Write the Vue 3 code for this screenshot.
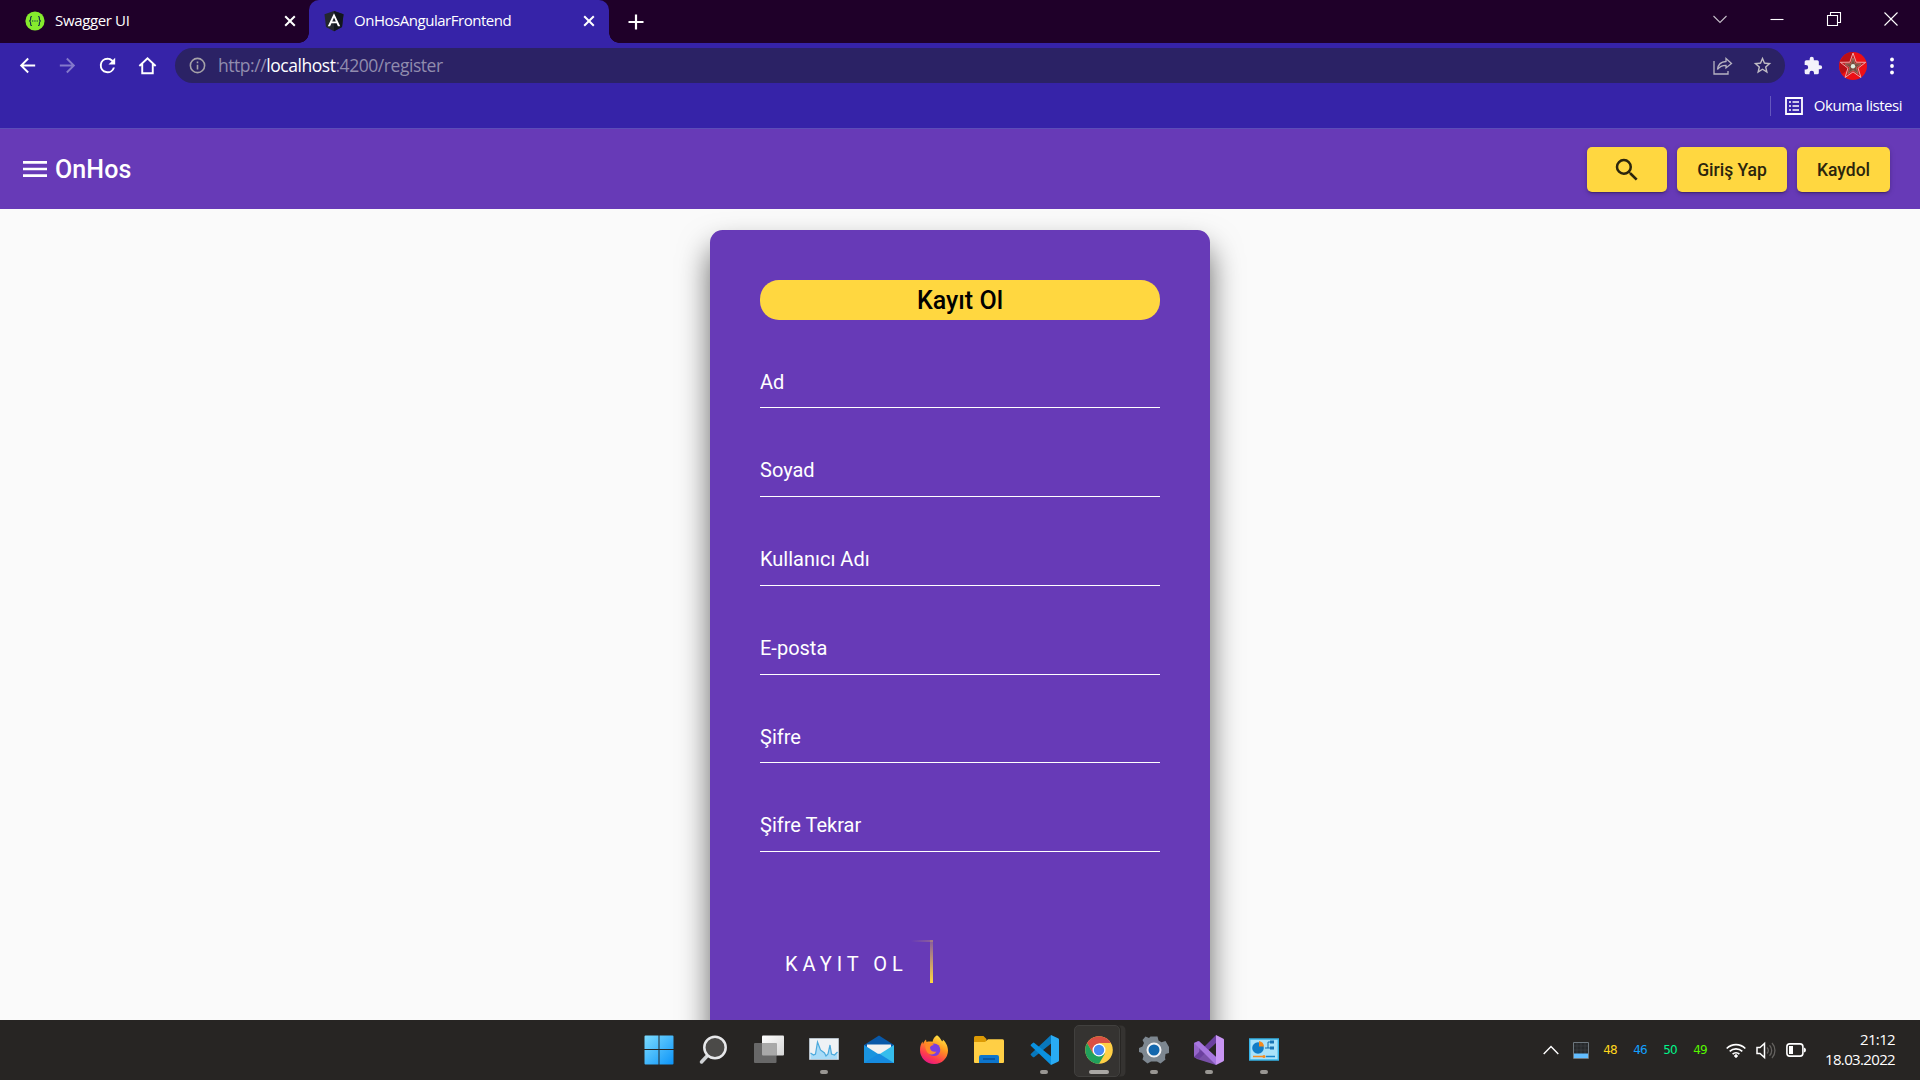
<script setup>
const fields = ['Ad', 'Soyad', 'Kullanıcı Adı', 'E-posta', 'Şifre', 'Şifre Tekrar']
const sensors = [
  { value: 48, tone: 'gold' },
  { value: 46, tone: 'blue' },
  { value: 50, tone: 'mint' },
  { value: 49, tone: 'lime' },
]
</script>

<template>
  <div class="screen">
    <div class="tabstrip">
      <div class="tab">
        <svg class="fav" viewBox="0 0 20 20"><circle cx="10" cy="10" r="9.6" fill="#85ea2d" /><g fill="none" stroke="#173647" stroke-width="1.2"><path d="M7 5.5C5.5 5.5 5.6 6.3 5.6 8c0 1.3-.3 2-1.500 2 1.200 0 1.500.7 1.500 2 0 1.700-.1 2.500 1.400 2.500M13 5.500c1.500 0 1.400.8 1.400 2.500 0 1.300.3 2 1.500 2-1.200 0-1.500.7-1.500 2 0 1.700.1 2.500-1.400 2.500" /><path d="M7 10h6" stroke-dasharray="1.300 1" /></g></svg>
        <span class="tab-name swagger">Swagger UI</span>
        <svg class="x" viewBox="0 0 12 12"><path d="M1.200 1.200l9.600 9.600M10.800 1.200L1.200 10.800" /></svg>
      </div>
      <div class="tab active">
        <svg class="fav" viewBox="0 0 20 20"><path d="M10 0l9.500 3.300L18 16l-8 4.300L2 16 .5 3.300z" fill="#23272e" /><path d="M10 0l9.500 3.300L18 16l-8 4.300z" fill="#11161d" /><path d="M10 2.200L3.800 15.300h2.300l1.300-3h5.200l1.300 3h2.300zm0 4.300l1.800 3.900H8.200z" fill="#fff" fill-rule="evenodd" /></svg>
        <span class="tab-name angular">OnHosAngularFrontend</span>
        <svg class="x" viewBox="0 0 12 12"><path d="M1.200 1.200l9.600 9.600M10.800 1.200L1.200 10.800" /></svg>
      </div>
      <svg class="plus" viewBox="0 0 16 16"><path d="M8 .5v15M.5 8h15" stroke="#fff" stroke-width="2.200" /></svg>
      <div class="window-buttons">
        <svg width="14" height="14" viewBox="0 0 14 14"><path d="M.5 4L7 10.500 13.500 4" stroke="#c5bdc8" /></svg>
        <svg width="14" height="14" viewBox="0 0 14 14"><path d="M.5 7.500h13" /></svg>
        <svg width="14" height="14" viewBox="0 0 14 14"><path d="M.5 3.500h10v10h-10zM3.500 3V.5h10v10H11" /></svg>
        <svg width="14" height="14" viewBox="0 0 14 14"><path d="M.5.5l13 13M13.500.5l-13 13" /></svg>
      </div>
    </div>

    <div class="toolbar">
      <div class="nav">
        <svg viewBox="0 0 24 24" fill="#fff"><path d="M20 11H7.830l5.590-5.590L12 4l-8 8 8 8 1.410-1.410L7.830 13H20v-2z" /></svg>
        <svg viewBox="0 0 24 24" fill="#8479cb"><path d="M12 4l-1.410 1.410L16.170 11H4v2h12.170l-5.580 5.590L12 20l8-8z" /></svg>
        <svg viewBox="0 0 24 24" fill="#fff"><path d="M17.650 6.350A7.960 7.960 0 0 0 12 4a8 8 0 1 0 7.730 10h-2.080A6 6 0 1 1 12 6c1.660 0 3.140.69 4.220 1.780L13 11h7V4z" /></svg>
        <svg viewBox="0 0 24 24" fill="none" stroke="#fff" stroke-width="2"><path d="M3.500 12.500L12 4.500l8.500 8M6.500 10.500V20h11v-9.500" /></svg>
      </div>
      <div class="omnibox">
        <svg class="info" viewBox="0 0 24 24" fill="#a5a2a8"><path d="M11 7h2v2h-2zm0 4h2v6h-2zm1-9a10 10 0 1 0 0 20 10 10 0 0 0 0-20zm0 18a8 8 0 1 1 0-16 8 8 0 0 1 0 16z" /></svg>
        <span class="url">http://<b>localhost</b>:4200/register</span>
        <svg class="share" viewBox="0 0 20 18" fill="none" stroke="#b7b3c2" stroke-width="1.300"><path d="M1 4v13h14v-3M13 1.500L18.500 6.500 13 11V8.300C8.500 8.300 6.300 9.800 4.500 12.500 5 8 8 4.700 13 4.500z" /></svg>
        <svg class="star" viewBox="0 0 24 24" fill="#c1bdc4"><path d="M22 9.240l-7.190-.62L12 2 9.190 8.630 2 9.240l5.460 4.730L5.820 21 12 17.270 18.180 21l-1.630-7.030L22 9.240zM12 15.400l-3.760 2.270 1-4.280-3.320-2.880 4.380-.38L12 6.100l1.710 4.040 4.380.38-3.320 2.880 1 4.280L12 15.400z" /></svg>
      </div>
      <svg class="puzzle" viewBox="0 0 24 24" fill="#f3f1fb"><path d="M20.500 11H19V7a2 2 0 0 0-2-2h-4V3.500a2.500 2.500 0 0 0-5 0V5H4a2 2 0 0 0-2 2v3.800h1.500a2.700 2.700 0 0 1 0 5.400H2V20a2 2 0 0 0 2 2h3.800v-1.500a2.700 2.700 0 0 1 5.400 0V22H17a2 2 0 0 0 2-2v-4h1.500a2.500 2.500 0 0 0 0-5z" /></svg>
      <svg class="avatar" viewBox="0 0 28 28"><circle cx="14" cy="14" r="14" fill="#ed1016" /><path d="M14 0A14 14 0 0 0 3 22L14 14z" fill="#b90f16" /><path d="M14 1l3.200 9.200 9.500.1-7.600 5.900 2.800 9.300L14 19.900l-7.900 5.600 2.800-9.300L1.300 10.300l9.500-.1z" fill="#c81e25" stroke="#efa7a5" stroke-width="1" /><path d="M14 6l2 5.800 6.100.1-4.900 3.700 1.800 6-5-3.600-5 3.600 1.800-6-4.900-3.700 6.100-.1z" fill="#7a4a3f" stroke="#8d8065" stroke-width=".8" /><circle cx="14" cy="14.200" r="2.200" fill="#dff0e0" /></svg>
      <svg class="dots" viewBox="0 0 4 18" fill="#fff"><circle cx="2" cy="2.500" r="1.900" /><circle cx="2" cy="9" r="1.900" /><circle cx="2" cy="15.500" r="1.900" /></svg>
    </div>

    <div class="bookmarks">
      <i class="divider"></i>
      <svg viewBox="0 0 18 18"><path d="M1 1h16v16H1z" fill="none" stroke="#fff" stroke-width="1.800" /><path d="M4 5h2M4 9h2M4 13h2M7.500 5H14M7.500 9H14M7.500 13H14" stroke="#fff" stroke-width="1.500" /></svg>
      <span>Okuma listesi</span>
    </div>

    <header class="appbar">
      <svg class="burger" viewBox="0 0 24 16"><path d="M0 1.400h24M0 8h24M0 14.600h24" stroke="#fff" stroke-width="2.700" /></svg>
      <span class="brand">OnHos</span>
      <button class="btn find"><svg viewBox="0 0 24 24" fill="#2b250d"><path d="M15.500 14h-.79l-.28-.27A6.470 6.470 0 0 0 16 9.500 6.500 6.500 0 1 0 9.500 16c1.610 0 3.090-.59 4.230-1.570l.27.28v.79l5 4.990L20.490 19l-4.990-5zm-6 0a4.500 4.500 0 1 1 0-9 4.500 4.500 0 0 1 0 9z" /></svg></button>
      <button class="btn login">Giriş Yap</button>
      <button class="btn signup">Kaydol</button>
    </header>

    <main class="page">
      <form class="card">
        <h2>Kayıt Ol</h2>
        <div v-for="name in fields" :key="name" class="field"><label>{{ name }}</label></div>
        <a class="submit">KAYIT OL<i class="edge-top"></i><i class="edge-right"></i></a>
      </form>
    </main>

    <footer class="taskbar">
      <div class="apps">
        <div class="app">
          <svg viewBox="0 0 30 30"><defs><linearGradient id="win" x1="0" y1="0" x2="1" y2="1" gradientUnits="objectBoundingBox"><stop stop-color="#7cdcff" /><stop offset="1" stop-color="#0c94f8" /></linearGradient></defs><path d="M1.500.5H14.500V14H.5V1.500a1 1 0 0 1 1-1zM15.500.5h13a1 1 0 0 1 1 1V14h-14zM.5 15h14v14.500h-13a1 1 0 0 1-1-1zM15.500 15h14v13.500a1 1 0 0 1-1 1h-13z" fill="url(#win)" /></svg>
        </div>
        <div class="app">
          <svg viewBox="0 0 30 30"><path d="M9 20l-6.500 7" stroke="#cfd2d5" stroke-width="3.500" stroke-linecap="round" /><circle cx="16" cy="12.500" r="10.700" fill="#4b4a48" stroke="#e7e8ea" stroke-width="2.500" /></svg>
        </div>
        <div class="app">
          <svg viewBox="0 0 30 30"><defs><linearGradient id="tv" x1="0" y1="0" x2="1" y2="1"><stop stop-color="#fff" /><stop offset="1" stop-color="#d5d5d5" /></linearGradient></defs><rect x="8" y=".5" width="22" height="20" rx="1" fill="url(#tv)" /><rect y="8" width="22.500" height="20" rx="1" fill="#686868" /><path d="M8 8h14.500v12.500H9a1 1 0 0 1-1-1z" fill="#a9a9a9" /></svg>
        </div>
        <div class="app running">
          <svg viewBox="0 0 30 30"><path d="M.5 3.500h29v21H.5z" fill="#eef2f5" stroke="#b5bfc8" /><path d="M1.500 18l3 2 2-1L8.500 7l3 8 4 3 1.500 3 2-2 2-9 1.500 9 3 1 3-3v7h-27z" fill="#a9dcf8" /><path d="M1.500 18l3 2 2-1L8.500 7l3 8 4 3 1.500 3 2-2 2-9 1.500 9 3 1 3-3" fill="none" stroke="#4ba9dc" stroke-width="1.200" /></svg>
        </div>
        <div class="app">
          <svg viewBox="0 0 30 30"><path d="M0 10L15 .5 30 10v8H0z" fill="#0858a8" /><path d="M3 9.500h24v7L15 21 3 16z" fill="#f1f1f1" /><path d="M0 10l15 9.500V28H0z" fill="#1a94df" /><path d="M30 10L15 19.500V28h15z" fill="#35bdec" /><path d="M0 28l15-9.500L30 28z" fill="#168be0" /></svg>
        </div>
        <div class="app">
          <svg viewBox="0 0 30 30"><defs><linearGradient id="fx" x1=".8" y1="0" x2=".3" y2="1"><stop stop-color="#fff04a" /><stop offset=".4" stop-color="#ff981f" /><stop offset=".75" stop-color="#ff3d4c" /><stop offset="1" stop-color="#e51587" /></linearGradient></defs><path d="M18 .2c3 2 4 4.800 5 6 1 .3 1-.7.700-1.700 2.500 2 5.300 6 5.300 11A13.500 13.500 0 0 1 15 29 14 14 0 0 1 1 15c0-4 1-6 2.500-8.500L4 9c.8-2 2-4 3-4.500L7.500 7c1.700-.5 4-.5 6-.2C14 4 15.500 1.500 18 .2z" fill="url(#fx)" /><circle cx="15" cy="14.800" r="6.300" fill="#7a3ee0" /><path d="M7 8.500c3-1.200 6.500-.5 8 1.500-2 0-3.500 1-4 2.500 0 3.500 3.500 5 6.500 4C15 21 9 20 7.500 16S6 11 7 8.500z" fill="#ff8a27" /></svg>
        </div>
        <div class="app">
          <svg viewBox="0 0 30 30"><path d="M0 2.500a1.500 1.500 0 0 1 1.500-1.500h8l3 3v4H0z" fill="#dc9a05" /><path d="M0 7h11l3-2.700h14.500A1.500 1.500 0 0 1 30 6v21a1 1 0 0 1-1 1H1a1 1 0 0 1-1-1z" fill="#ffcf45" /><path d="M5 28v-6a2 2 0 0 1 2-2h16a2 2 0 0 1 2 2v6z" fill="#0d75cc" /><path d="M9 24h12" stroke="#084b91" stroke-width="1.400" /></svg>
        </div>
        <div class="app running">
          <svg viewBox="0 0 30 30"><path d="M22 0L2 18.800a1 1 0 0 0 0 1.500l1.800 1.600a1.300 1.300 0 0 0 1.600 0L24 7z" fill="#0878bd" /><path d="M22 30L2 11a1 1 0 0 1 0-1.500l1.800-1.600a1.300 1.300 0 0 1 1.600 0L24 23z" fill="#0a91df" /><path d="M22 0l7 3.300a1.500 1.500 0 0 1 1 1.300v20.800a1.500 1.500 0 0 1-1 1.300L22 30z" fill="#29abf4" /></svg>
        </div>
        <div class="app running current">
          <svg viewBox="0 0 30 30"><circle cx="15" cy="15" r="13.800" fill="#ffcf45" /><path d="M3.050 8.100A13.800 13.800 0 0 1 26.950 8.100H15L9 18.500z" fill="#d94f43" /><path d="M3.050 8.100A13.800 13.800 0 0 0 15 28.800L21 18.500H9z" fill="#21a15c" /><circle cx="15" cy="15" r="6.500" fill="#fff" /><circle cx="15" cy="15" r="5.200" fill="#4589f3" /></svg>
        </div>
        <div class="app running">
          <svg viewBox="0 0 30 30"><path d="M11.500 1.500h7l1 4 3 1.700 4-1.300L30 12v6l-3.500 1-.500 4 .500 1.500-5 4-3.500-2h-6l-3.500 2-5-4 1-3.500L3 18l-3-1v-4l3.500-1.500L5 8 3.500 5l3-3.500L10 3z" fill="#7d8790" /><circle cx="15" cy="15" r="6.500" fill="#1367ad" stroke="#f2f3f4" stroke-width="2" /></svg>
        </div>
        <div class="app running">
          <svg viewBox="0 0 30 30"><path d="M0 8l4-2 18 16v8L3 24l-3-2z" fill="#7950a9" /><path d="M0 8l5 3v8l-5 3z" fill="#9565ca" /><path d="M0 22L22 0v8L5 24z" fill="#6b409f" /><path d="M0 8l5-2 17 16v8z" fill="#a777df" /><path d="M22 0l7 3.500a1.500 1.500 0 0 1 1 1.300v20.400a1.500 1.500 0 0 1-1 1.300L22 30z" fill="#c895f3" /></svg>
        </div>
        <div class="app running">
          <svg viewBox="0 0 30 30"><path d="M.7 4h28.600v21H.7z" fill="#a9e2fa" stroke="#36b4e8" stroke-width="1.400" /><circle cx="9" cy="13" r="5.800" fill="#117cc6" /><path d="M10 11.500V6a6 6 0 0 1 5 5.500z" fill="#f58b1f" /><path d="M16 13h3V7h3M19 13h3" fill="none" stroke="#136fae" /><path d="M21 5.500h4v3h-4zM21 11.500h4v3h-4z" fill="#1975b6" /><path d="M4 21.500h10" stroke="#f58b1f" stroke-width="1.500" /><path d="M17 21.500h9" stroke="#1684cc" stroke-width="1.500" /><circle cx="15" cy="21.500" r="1.500" fill="#f58b1f" /></svg>
        </div>
      </div>
      <div class="tray">
        <svg class="chevron" viewBox="0 0 16 10"><path d="M.7 9L8 1.500 15.300 9" fill="none" stroke="#fff" stroke-width="1.400" /></svg>
        <svg class="meter" viewBox="0 0 16 17"><path d="M.5.5h15v16H.5z" fill="#26292b" stroke="#6d777e" /><path d="M4 1v11M8 1v11M12 1v11M1 4h14M1 8h14" stroke="#3f4447" stroke-width=".6" /><path d="M1 11.500h14V16H1z" fill="#62bdff" /></svg>
        <span v-for="s in sensors" :key="s.value" class="sensor" :class="s.tone">{{ s.value }}</span>
        <svg class="wifi" viewBox="0 0 20 15" fill="none" stroke="#fff" stroke-width="1.600"><path d="M.7 5.500a13.200 13.200 0 0 1 18.600 0M3.700 8.400a9 9 0 0 1 12.600 0M6.600 11.200a5 5 0 0 1 6.800 0" /><circle cx="10" cy="13" r="1.300" fill="#fff" stroke-width="1" /></svg>
        <svg class="volume" viewBox="0 0 20 17" fill="none" stroke="#fff" stroke-width="1.500"><path d="M1 5.500h3L8.500 1.500v14L4 11.500H1z" /><path d="M11 5.500a4.500 4.500 0 0 1 0 6M13.500 3.200a7.500 7.500 0 0 1 0 10.600M16 1a11 11 0 0 1 0 15" stroke="#64625f" stroke-width="1.300" /></svg>
        <svg class="battery" viewBox="0 0 20 14"><rect x=".9" y=".9" width="16" height="12.200" rx="2.800" fill="none" stroke="#fff" stroke-width="1.600" /><path d="M3 3h4v8H3z" fill="#fff" /><path d="M18 4.500q2 .5 2 2.500t-2 2.500z" fill="#fff" /></svg>
        <div class="clock"><span class="time">21:12</span><span class="date">18.03.2022</span></div>
      </div>
    </footer>
  </div>
</template>

<style>
html, body { margin: 0; overflow: hidden; }
</style>

<style scoped>
* { box-sizing: border-box; }
svg { display: block; flex: none; overflow: visible; }
.screen { width: 1920px; height: 1080px; display: flex; flex-direction: column; overflow: hidden; background: #fafafa; font-family: "Open Sans", "Noto Sans", sans-serif; }

.tabstrip { height: 43px; flex: none; background: #1f0029; display: flex; align-items: center; color: #fff; }
.tab { width: 309px; height: 43px; padding: 0 13px 2px 25px; display: flex; align-items: center; font-size: 15px; }
.tab.active { width: 300px; padding: 0 14px 2px 15px; background: #3623a8; border-radius: 10px 10px 0 0; position: relative; }
.tab.active::before, .tab.active::after { content: ""; position: absolute; bottom: 0; width: 10px; height: 10px; }
.tab.active::before { left: -10px; background: radial-gradient(circle at 0 0, transparent 9.500px, #3623a8 10px); }
.tab.active::after { right: -10px; background: radial-gradient(circle at 100% 0, transparent 9.500px, #3623a8 10px); }
.fav { width: 20px; height: 20px; margin-right: 10px; }
.tab-name { flex: 1; white-space: nowrap; padding-bottom: 2px; }
.swagger { letter-spacing: -.35px; }
.angular { letter-spacing: -.47px; }
.x { width: 12px; height: 12px; stroke: #fff; stroke-width: 2; }
.plus { width: 16px; height: 16px; margin-left: 19px; }
.window-buttons { margin-left: auto; margin-right: 22px; display: flex; gap: 43px; padding-bottom: 6px; }
.window-buttons svg { fill: none; stroke: #fff; stroke-width: 1.100; }

.toolbar { height: 45px; flex: none; background: #3623a8; display: flex; align-items: center; padding-left: 16px; }
.nav { display: flex; gap: 17px; width: 159px; }
.nav svg { width: 23px; height: 23px; }
.omnibox { width: 1610px; height: 35px; border-radius: 18px; background: #2b2265; display: flex; align-items: center; padding: 0 12px 0 13px; }
.info { width: 19px; height: 19px; }
.url { font-size: 17.500px; letter-spacing: -.45px; color: #918cae; margin-left: 11px; white-space: nowrap; padding-bottom: 2px; }
.url b { color: #fff; font-weight: 400; }
.share { width: 20px; height: 18px; margin-left: auto; }
.star { width: 21px; height: 21px; margin-left: 19px; }
.puzzle { width: 20px; height: 20px; margin-left: 18px; }
.avatar { width: 28px; height: 28px; margin-left: 16px; }
.dots { width: 4px; height: 18px; margin-left: 23px; }

.bookmarks { height: 41px; flex: none; background: #3623a8; border-bottom: 1px solid #5d4cb9; display: flex; justify-content: flex-end; align-items: center; padding: 0 18px 5px 0; color: #fff; font-size: 15px; letter-spacing: -.47px; }
.bookmarks span { padding-bottom: 2px; }
.divider { width: 1px; height: 20px; background: #6557bd; margin-right: 14px; }
.bookmarks svg { width: 18px; height: 18px; margin-right: 11px; }

.appbar { height: 80px; flex: none; background: #673ab7; display: flex; align-items: center; padding: 0 30px 0 23px; font-family: Roboto, sans-serif; }
.burger { width: 24px; height: 16px; }
.brand { color: #fff; font-size: 25px; font-weight: 500; letter-spacing: .1px; margin-left: 8px; margin-right: auto; padding-top: 1px; }
.btn { height: 45px; border: 0; border-radius: 5px; background: #ffd740; color: #2b250d; font: 500 17.500px Roboto, sans-serif; padding: 0; margin-left: 10px; display: flex; justify-content: center; align-items: center; box-shadow: 0 3px 1px -2px rgba(0, 0, 0, .2), 0 2px 3px rgba(0, 0, 0, .14), 0 1px 6px rgba(0, 0, 0, .12); }
.login, .signup { padding-top: 1px; }
.find { width: 80px; padding-top: 2px; }
.find svg { width: 30px; height: 30px; }
.login { width: 110px; }
.signup { width: 93px; }

.page { flex: 1; min-height: 0; overflow: hidden; display: flex; justify-content: center; align-items: flex-start; padding-top: 21px; background: #fafafa; font-family: Roboto, sans-serif; }
.card { width: 500px; height: 900px; flex: none; background: #673ab7; border-radius: 12.500px; padding: 50px; box-shadow: 0 18.750px 31.250px rgba(0, 0, 0, .6); }
h2 { margin: 0 0 37.300px; height: 40px; line-height: 42px; border-radius: 19px; background: #ffd740; color: #000; text-align: center; font-size: 25px; font-weight: 500; }
.field { height: 51px; margin-bottom: 37.750px; border-bottom: 1px solid #fff; padding-top: 12.400px; color: #fff; font-size: 20px; line-height: 24px; }
.field label { display: block; }
.submit { display: inline-block; position: relative; margin-top: 50.200px; padding: 13.200px 25px 11.800px; height: 48px; color: #fff; font-size: 20px; line-height: 23px; letter-spacing: 5px; overflow: hidden; }
.edge-top { position: absolute; top: 0; right: 0; width: 22px; height: 2px; background: linear-gradient(90deg, rgba(255, 215, 64, 0), rgba(255, 215, 64, .25)); }
.edge-right { position: absolute; top: 0; right: 0; width: 2.500px; height: 43px; background: linear-gradient(rgba(255, 215, 64, .2), #ffd740); }

.taskbar { height: 60px; flex: none; background: #272523; display: flex; align-items: center; justify-content: flex-end; padding-left: 633.500px; }
.apps { display: flex; gap: 5px; margin-right: auto; }
.app { width: 50px; height: 60px; display: flex; justify-content: center; padding-top: 15px; position: relative; }
.app svg { width: 30px; height: 30px; position: relative; }
.app.running::after { content: ""; position: absolute; width: 8px; height: 4px; border-radius: 2px; left: 21px; top: 50px; background: #999793; }
.app.current::before { content: ""; position: absolute; left: 0; top: 5px; width: 44px; height: 50px; border-radius: 5px; background: #353331; border: 1px solid #41403e; box-shadow: 1px 0 0 #272523, 6px 0 0 -.500px #353331; }
.app.current::after { width: 20px; left: 15px; background: #aaa8a5; }

.tray { display: flex; align-items: center; color: #fff; }
.chevron { width: 16px; height: 10px; margin-right: 14px; }
.meter { width: 16px; height: 17px; margin-right: 6px; }
.sensor { width: 30px; font: 12px "DejaVu Sans", sans-serif; letter-spacing: -1px; text-align: center; }
.gold { color: #ffd51c; }
.blue { color: #12a0ff; }
.mint { color: #00f68b; }
.lime { color: #55f500; }
.wifi { width: 20px; height: 15px; margin-left: 11px; }
.volume { width: 20px; height: 17px; margin-left: 10px; }
.battery { width: 20px; height: 14px; margin-left: 10px; }
.clock { width: 114px; padding: 0 25px 2px 0; display: flex; flex-direction: column; align-items: flex-end; font-size: 15px; line-height: 20px; letter-spacing: -.65px; }
</style>
